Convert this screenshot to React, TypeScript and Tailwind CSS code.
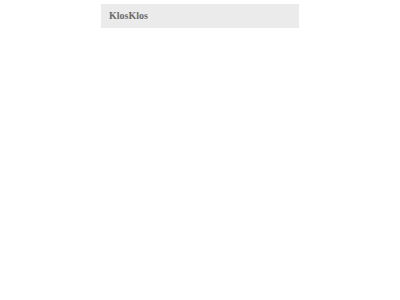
import React from "react";

export default function App() {
  return (
    <div className="w-[400px] h-[300px] bg-white overflow-hidden">
      <div className="flex justify-center pt-[4px]">
        <div className="w-[198px] h-[24px] bg-[#ebebeb] flex items-center pl-[8px]">
          <span
            className="text-[10px] font-bold text-[#6b6b6b] leading-none"
            style={{ fontFamily: '"Liberation Serif", "DejaVu Serif", serif' }}
          >
            KlosKlos
          </span>
        </div>
      </div>
    </div>
  );
}
